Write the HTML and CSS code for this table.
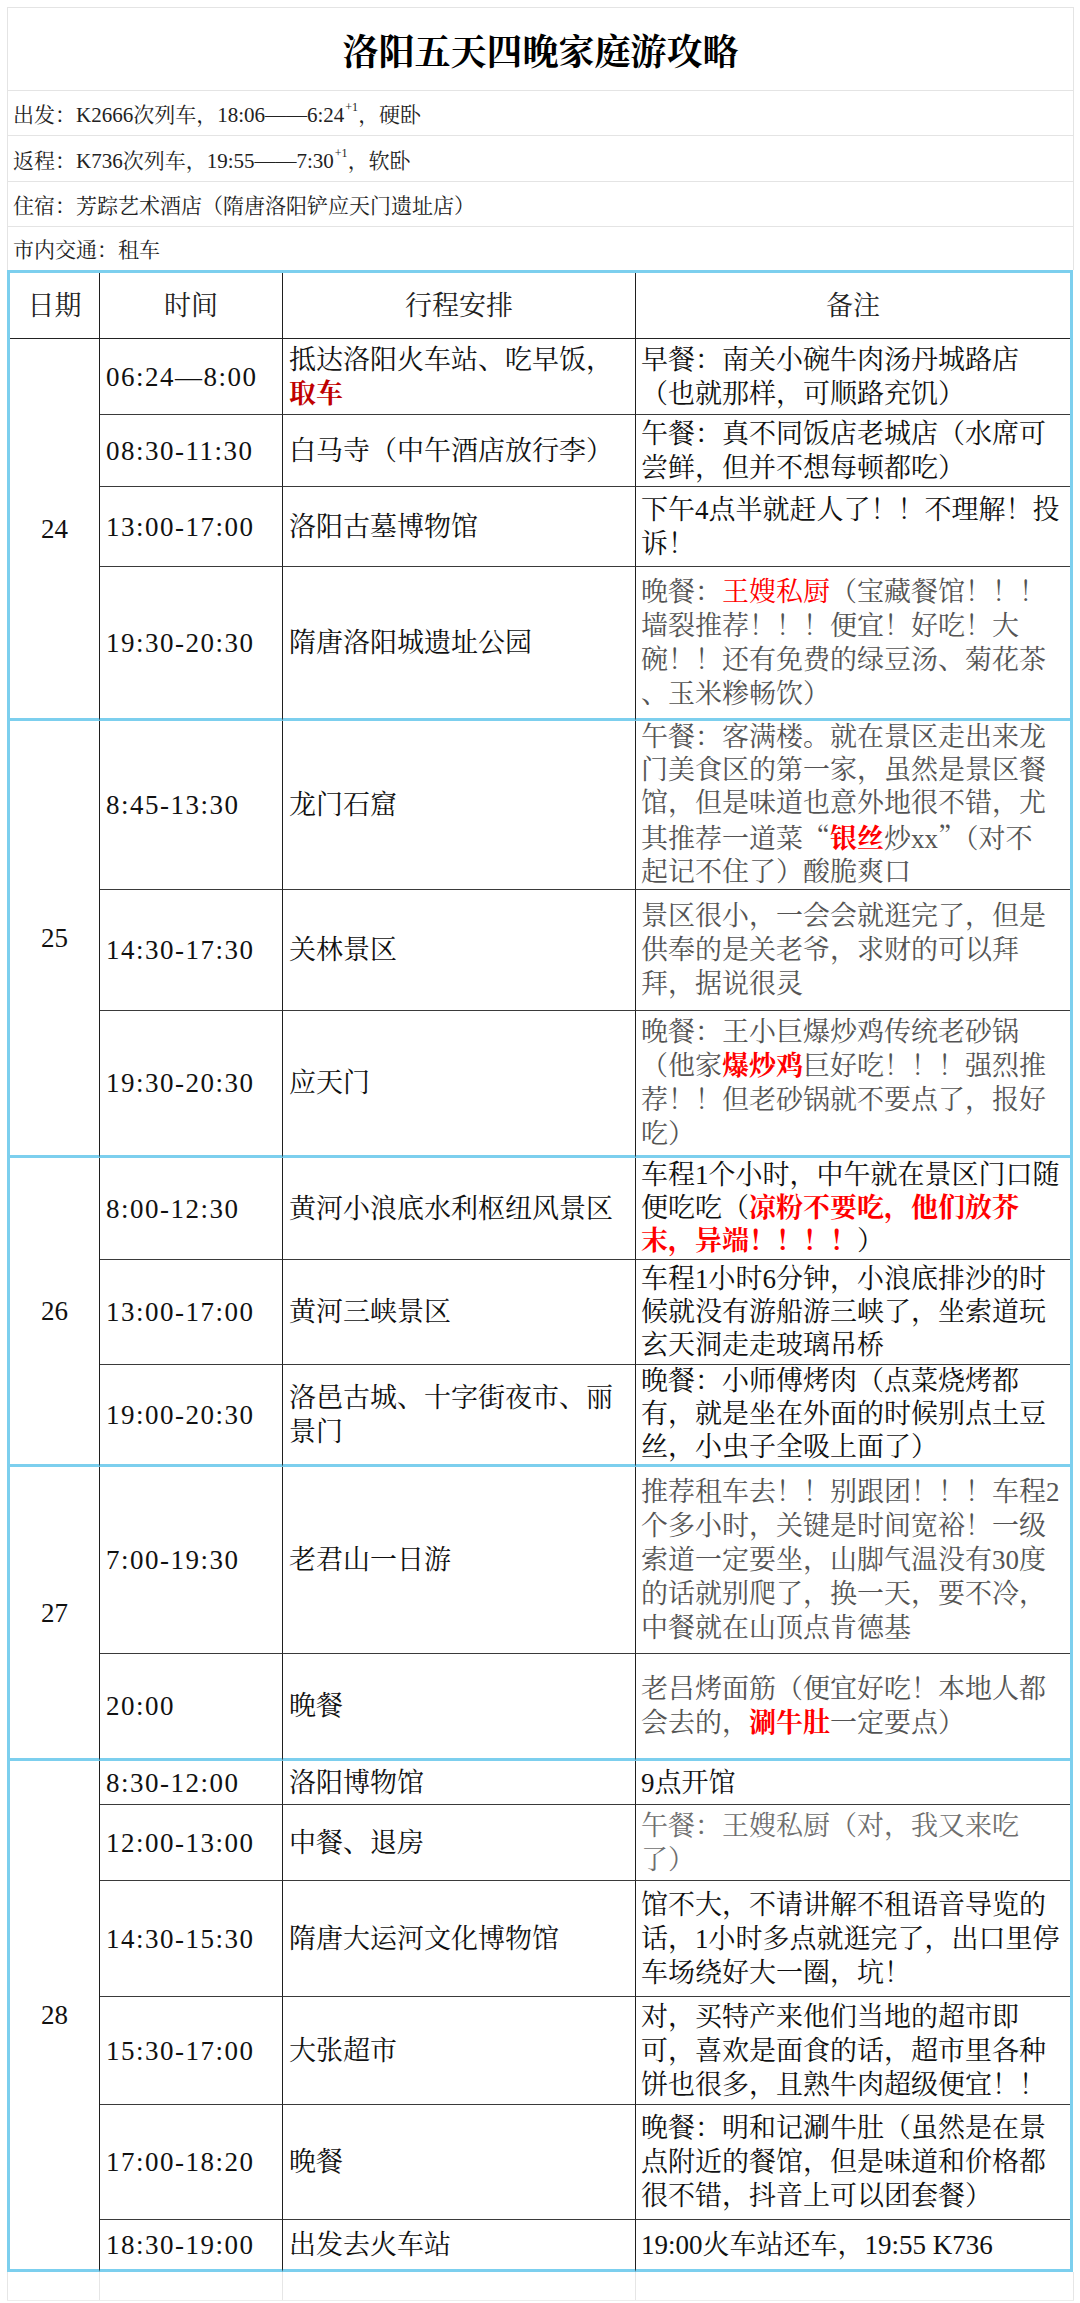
FILE: index.html
```html
<!DOCTYPE html>
<html lang="zh-CN">
<head>
<meta charset="utf-8">
<title>洛阳五天四晚家庭游攻略</title>
<link rel="stylesheet" href="styles.css">
</head>
<body>
<div class="sheet">
  <div class="title">洛阳五天四晚家庭游攻略</div>
  <div class="info i1"><span>出发：K2666次列车，18:06——6:24<sup class="sup">+1</sup>，硬卧</span></div>
  <div class="info i2"><span>返程：K736次列车，19:55——7:30<sup class="sup">+1</sup>，软卧</span></div>
  <div class="info i3"><span>住宿：芳踪艺术酒店（隋唐洛阳铲应天门遗址店）</span></div>
  <div class="info i4"><span>市内交通：租车</span></div>
  <table class="plan">
    <colgroup>
      <col class="w-day"><col class="w-time"><col class="w-act"><col class="w-note">
    </colgroup>
    <thead>
      <tr class="hd">
        <th>日期</th><th>时间</th><th>行程安排</th><th class="note">备注</th>
      </tr>
    </thead>
    <tbody>
      <tr class="h76">
        <td class="day" rowspan="4">24</td>
        <td class="time">06:24—8:00</td>
        <td class="act">抵达洛阳火车站、吃早饭，<br><span class="dk">取车</span></td>
        <td class="note">早餐：南关小碗牛肉汤丹城路店<br>（也就那样，可顺路充饥）</td>
      </tr>
      <tr class="h72">
        <td class="time">08:30-11:30</td>
        <td class="act">白马寺（中午酒店放行李）</td>
        <td class="note">午餐：真不同饭店老城店（水席可<br>尝鲜，但并不想每顿都吃）</td>
      </tr>
      <tr class="h80">
        <td class="time">13:00-17:00</td>
        <td class="act">洛阳古墓博物馆</td>
        <td class="note">下午4点半就赶人了！！不理解！投<br>诉！</td>
      </tr>
      <tr class="h154 last">
        <td class="time">19:30-20:30</td>
        <td class="act">隋唐洛阳城遗址公园</td>
        <td class="note muted">晚餐：<span class="hl">王嫂私厨</span>（宝藏餐馆！！！<br>墙裂推荐！！！便宜！好吃！大<br>碗！！还有免费的绿豆汤、菊花茶<br>、玉米糁畅饮）</td>
      </tr>

      <tr class="h169">
        <td class="day" rowspan="3">25</td>
        <td class="time">8:45-13:30</td>
        <td class="act">龙门石窟</td>
        <td class="note muted tight">午餐：客满楼。就在景区走出来龙<br>门美食区的第一家，虽然是景区餐<br>馆，但是味道也意外地很不错，尤<br>其推荐一道菜<span class="cjk">“</span><span class="hl b">银丝</span>炒xx<span class="cjk">”</span>（对不<br>起记不住了）酸脆爽口</td>
      </tr>
      <tr class="h121">
        <td class="time">14:30-17:30</td>
        <td class="act">关林景区</td>
        <td class="note muted">景区很小，一会会就逛完了，但是<br>供奉的是关老爷，求财的可以拜<br>拜，据说很灵</td>
      </tr>
      <tr class="h147 last">
        <td class="time">19:30-20:30</td>
        <td class="act">应天门</td>
        <td class="note muted">晚餐：王小巨爆炒鸡传统老砂锅<br>（他家<span class="hl b">爆炒鸡</span>巨好吃！！！强烈推<br>荐！！但老砂锅就不要点了，报好<br>吃）</td>
      </tr>

      <tr class="h102">
        <td class="day" rowspan="3">26</td>
        <td class="time">8:00-12:30</td>
        <td class="act">黄河小浪底水利枢纽风景区</td>
        <td class="note tight">车程1个小时，中午就在景区门口随<br>便吃吃（<span class="hl b">凉粉不要吃，他们放芥<br>末，异端！！！！</span>）</td>
      </tr>
      <tr class="h105">
        <td class="time">13:00-17:00</td>
        <td class="act">黄河三峡景区</td>
        <td class="note tight">车程1小时6分钟，小浪底排沙的时<br>候就没有游船游三峡了，坐索道玩<br>玄天洞走走玻璃吊桥</td>
      </tr>
      <tr class="h101 last">
        <td class="time">19:00-20:30</td>
        <td class="act">洛邑古城、十字街夜市、丽<br>景门</td>
        <td class="note tight">晚餐：小师傅烤肉（点菜烧烤都<br>有，就是坐在外面的时候别点土豆<br>丝，小虫子全吸上面了）</td>
      </tr>

      <tr class="h187">
        <td class="day" rowspan="2">27</td>
        <td class="time">7:00-19:30</td>
        <td class="act">老君山一日游</td>
        <td class="note muted">推荐租车去！！别跟团！！！车程2<br>个多小时，关键是时间宽裕！一级<br>索道一定要坐，山脚气温没有30度<br>的话就别爬了，换一天，要不冷，<br>中餐就在山顶点肯德基</td>
      </tr>
      <tr class="h107 last">
        <td class="time">20:00</td>
        <td class="act">晚餐</td>
        <td class="note muted">老吕烤面筋（便宜好吃！本地人都<br>会去的，<span class="hl b">涮牛肚</span>一定要点）</td>
      </tr>

      <tr class="h44">
        <td class="day" rowspan="6">28</td>
        <td class="time">8:30-12:00</td>
        <td class="act">洛阳博物馆</td>
        <td class="note">9点开馆</td>
      </tr>
      <tr class="h76">
        <td class="time">12:00-13:00</td>
        <td class="act">中餐、退房</td>
        <td class="note faint">午餐：王嫂私厨（对，我又来吃<br>了）</td>
      </tr>
      <tr class="h116">
        <td class="time">14:30-15:30</td>
        <td class="act">隋唐大运河文化博物馆</td>
        <td class="note">馆不大，不请讲解不租语音导览的<br>话，1小时多点就逛完了，出口里停<br>车场绕好大一圈，坑！</td>
      </tr>
      <tr class="h108">
        <td class="time">15:30-17:00</td>
        <td class="act">大张超市</td>
        <td class="note">对，买特产来他们当地的超市即<br>可，喜欢是面食的话，超市里各种<br>饼也很多，且熟牛肉超级便宜！！</td>
      </tr>
      <tr class="h115">
        <td class="time">17:00-18:20</td>
        <td class="act">晚餐</td>
        <td class="note">晚餐：明和记涮牛肚（虽然是在景<br>点附近的餐馆，但是味道和价格都<br>很不错，抖音上可以团套餐）</td>
      </tr>
      <tr class="h52 last">
        <td class="time">18:30-19:00</td>
        <td class="act">出发去火车站</td>
        <td class="note">19:00火车站还车，19:55 K736</td>
      </tr>
    </tbody>
  </table>
  <div class="tail">
    <div class="tc t1"></div><div class="tc t2"></div><div class="tc t3"></div><div class="tc t4"></div>
  </div>
</div>
</body>
</html>
```
FILE: styles.css
```css
html, body {
  margin: 0;
  padding: 0;
  background: #ffffff;
}

body {
  font-family: "Liberation Serif", "Noto Serif CJK SC", "Noto Sans CJK SC", serif;
  color: #111111;
}

.sheet {
  width: 1067px;
  margin: 7px 0 0 7px;
}

.title {
  box-sizing: border-box;
  height: 84px;
  border: 1px solid #e4e4e4;
  display: flex;
  align-items: center;
  justify-content: center;
  font-size: 36px;
  font-weight: bold;
  color: #000000;
}

.info {
  box-sizing: border-box;
  display: flex;
  align-items: flex-end;
  padding: 0 0 6px 5px;
  border-left: 1px solid #e4e4e4;
  border-right: 1px solid #e4e4e4;
  border-bottom: 1px solid #e4e4e4;
  font-size: 21px;
  line-height: 27px;
  color: #222222;
  white-space: nowrap;
}

.sup {
  font-size: 12px;
  line-height: 0;
  vertical-align: 11px;
  margin-left: 1px;
}

.i1 { height: 45px; }
.i2 { height: 46px; }
.i3 { height: 45px; }
.i4 { height: 43px; border-bottom: 0; }

.plan {
  width: 1066px;
  table-layout: fixed;
  border-collapse: separate;
  border-spacing: 0;
  border-top: 3px solid #7ccfee;
  border-left: 3px solid #7ccfee;
  border-right: 3px solid #7ccfee;
  box-sizing: border-box;
}

.w-day { width: 90px; }
.w-time { width: 183px; }
.w-act { width: 353px; }
.w-note { width: auto; }

.plan th,
.plan td {
  box-sizing: border-box;
  padding: 0 5px;
  border-right: 1px solid #1f1f1f;
  border-bottom: 1px solid #3a3a3a;
  font-size: 27px;
  line-height: 34px;
  font-weight: normal;
  vertical-align: middle;
  text-align: left;
  white-space: nowrap;
  overflow: hidden;
}

.plan th {
  text-align: center;
  color: #222222;
  border-bottom-color: #222222;
}

.plan .note {
  border-right: 0;
}

.plan td.tight {
  line-height: 33px;
}

.cjk {
  font-family: "Noto Serif CJK SC", "Noto Sans CJK SC", serif;
}

.hd { height: 66px; }

.plan td.day {
  text-align: center;
  padding: 0;
  border-bottom: 3px solid #7ccfee;
}

.plan tr.last td {
  border-bottom: 3px solid #7ccfee;
}

.plan td.time {
  letter-spacing: 1.5px;
  padding-left: 6px;
}

.plan td.act {
  padding-left: 6px;
}

.muted { color: #545454; }
.faint { color: #6e6e6e; }

.hl { color: #ff0000; }
.hl.b { font-weight: bold; }
.dk { color: #c00000; font-weight: bold; }

.h44 { height: 44px; }
.h52 { height: 52px; }
.h72 { height: 72px; }
.h76 { height: 76px; }
.h80 { height: 80px; }
.h101 { height: 101px; }
.h102 { height: 102px; }
.h105 { height: 105px; }
.h107 { height: 107px; }
.h108 { height: 108px; }
.h115 { height: 115px; }
.h116 { height: 116px; }
.h121 { height: 121px; }
.h147 { height: 147px; }
.h154 { height: 154px; }
.h169 { height: 169px; }
.h187 { height: 187px; }

.tail {
  display: flex;
  height: 28px;
  border-bottom: 1px solid #ededed;
}

.tc {
  box-sizing: border-box;
  height: 100%;
  border-right: 1px solid #e6e6e6;
}

.t1 { width: 93px; border-left: 1px solid #e6e6e6; }
.t2 { width: 183px; }
.t3 { width: 353px; }
.t4 { flex: 1; }
```
